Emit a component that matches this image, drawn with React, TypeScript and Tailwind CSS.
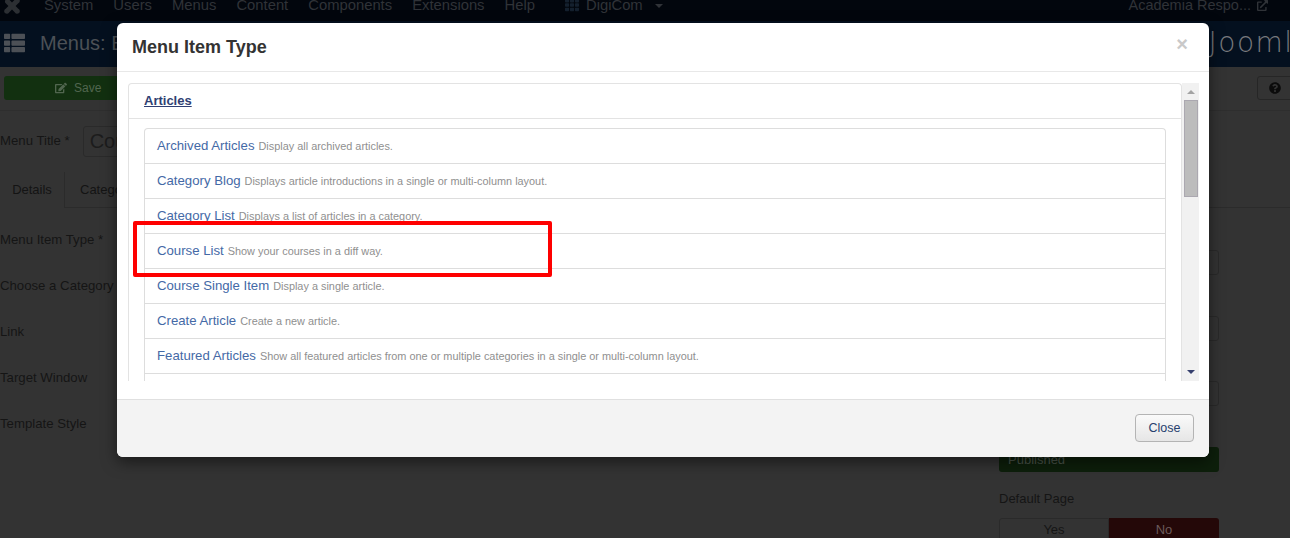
import React from "react";
import { FaExternalLinkAlt, FaQuestionCircle, FaEdit, FaTh, FaThList } from "react-icons/fa";

const rows: [string, string][] = [
  ["Archived Articles", "Display all archived articles."],
  ["Category Blog", "Displays article introductions in a single or multi-column layout."],
  ["Category List", "Displays a list of articles in a category."],
  ["Course List", "Show your courses in a diff way."],
  ["Course Single Item", "Display a single article."],
  ["Create Article", "Create a new article."],
  ["Featured Articles", "Show all featured articles from one or multiple categories in a single or multi-column layout."],
  ["", ""],
];

const navItems = ["System", "Users", "Menus", "Content", "Components", "Extensions", "Help"];
const labels = ["Menu Item Type *", "Choose a Category *", "Link", "Target Window", "Template Style"];

function Background() {
  return (
    <div className="h-[538px] w-[1290px] overflow-hidden bg-[#333333]">
      <div className="flex h-[21px] items-center overflow-hidden bg-[#02060d] text-[14.8px] text-[#303338]">
        <svg viewBox="0 0 20 20" className="ml-[3px] mt-[-10px] h-[18px] w-[18px] shrink-0" fill="#2c2f33">
          <path d="M3 2a3 3 0 0 1 4 1l3 3 3-3a3 3 0 1 1 4 4l-3 3 3 3a3 3 0 1 1-4 4l-3-3-3 3a3 3 0 1 1-4-4l3-3-3-3a3 3 0 0 1 0-4z" />
        </svg>
        <div className="ml-[23px] mt-[-10px] flex gap-[20px]">
          {navItems.map((n) => (
            <span key={n} className="leading-none">{n}</span>
          ))}
        </div>
        <div className="ml-[30px] mt-[-10px] flex items-center gap-[7px]">
          <FaTh className="h-[14px] w-[14px] text-[#14202e]" />
          <span className="leading-none">DigiCom</span>
          <span className="ml-[5px] mt-[2px] h-0 w-0 border-x-[4px] border-t-[4px] border-x-transparent border-t-[#303338]" />
        </div>
        <div className="ml-auto mr-[22px] mt-[-10px] flex items-center gap-[6px] text-[14.5px]">
          <span className="leading-none">Academia Respo...</span>
          <FaExternalLinkAlt className="h-[11px] w-[11px]" />
        </div>
      </div>
      <div className="flex h-[46px] items-center justify-between overflow-hidden bg-[#04101f]">
        <div className="ml-[4px] mt-[-2px] flex items-center gap-[15px] text-[20px] text-[#4c5056]">
          <FaThList className="h-[22px] w-[21px]" />
          <span>Menus: Edit</span>
        </div>
        <span className="mr-[-35px] mt-[-2px] shrink-0 font-['DejaVu_Sans'] text-[28px] font-extralight tracking-[1.5px] text-[#77797d]">Joomla!</span>
      </div>
      <div className="flex h-[44px] items-start justify-between border-b border-[#2e2e2e] pt-[9px]">
        <div className="ml-[4px] flex h-[24px] w-[150px] items-center gap-[7px] rounded-[3px] bg-[#123010] pl-[51px] text-[12px] text-[#51664f]">
          <FaEdit className="h-[12px] w-[12px]" />
          <span>Save</span>
        </div>
        <div className="mr-[-20px] flex h-[24px] w-[53px] items-center rounded-[3px] border border-[#262626] pl-[11px]">
          <FaQuestionCircle className="h-[12px] w-[12px] text-[#0b0b0b]" />
        </div>
      </div>
      <div className="mt-[15px] flex items-center gap-[13px] text-[13.2px] text-[#151515]">
        <span className="mt-[-2px]">Menu Title *</span>
        <div className="h-[31px] w-[200px] rounded-[3px] border border-[#2a2a2a] pl-[6px] text-[20px] leading-[29px] text-[#1c1c1c]">Course</div>
      </div>
      <div className="mt-[15px] flex h-[36px] border-b border-[#2b2b2b] text-[13px] text-[#141414]">
        <div className="flex h-[36px] w-[65px] items-center justify-center border-r border-[#2b2b2b] bg-[#333333]">Details</div>
        <div className="ml-[15px] flex items-center">Categories</div>
      </div>
      <div className="flex justify-between">
        <div className="mt-[23px] flex flex-col gap-[28px] text-[13.2px] leading-[18px] text-[#151515]">
          {labels.map((l) => (
            <span key={l}>{l}</span>
          ))}
        </div>
        <div className="mr-[71px] flex w-[220px] flex-col">
          <div className="mt-[42px] h-[25px] rounded-[3px] border border-[#2a2a2a]" />
          <div className="mt-[41px] h-[25px] rounded-[3px] border border-[#2a2a2a]" />
          <div className="mt-[40px] h-[25px] rounded-[3px] border border-[#2a2a2a]" />
          <div className="mt-[41px] flex h-[25px] items-center rounded-[3px] bg-[#0d1f0b] pl-[9px] pt-[1px] text-[13px] text-[#4a544a]">Published</div>
          <span className="mt-[18px] text-[13px] leading-[18px] text-[#151515]">Default Page</span>
          <div className="mt-[10px] flex h-[24px] text-[13px]">
            <div className="flex w-[110px] items-center justify-center rounded-l-[3px] border border-[#2a2a2a] text-[#151515]">Yes</div>
            <div className="flex w-[110px] items-center justify-center rounded-r-[3px] bg-[#240808] text-[#6b5a5a]">No</div>
          </div>
        </div>
      </div>
    </div>
  );
}

function Modal() {
  return (
    <div className="absolute left-[117px] top-[23px] flex h-[434px] w-[1092px] flex-col overflow-hidden rounded-[6px] bg-white shadow-[0_5px_15px_rgba(0,0,0,0.5)]">
      <div className="flex h-[49px] shrink-0 items-center justify-between border-b border-[#e8e8e8] pl-[15px] pr-[21px]">
        <h3 className="text-[18px] font-bold text-[#333333]">Menu Item Type</h3>
        <span className="mt-[-6px] text-[20px] font-bold leading-none text-[#c9c9c9]">×</span>
      </div>
      <div className="flex h-[328px] shrink-0 items-start border-b border-[#e0e0e0] pl-[11px] pt-[11px]">
        <div className="h-[298px] w-[1054px] overflow-hidden rounded-t-[4px] border-x border-t border-[#e3e3e3]">
          <div className="flex h-[35px] items-center border-b border-[#e3e3e3] pl-[15px]">
            <a className="text-[13px] font-bold text-[#2f3f73] underline">Articles</a>
          </div>
          <div className="ml-[15px] mt-[9px] w-[1022px] rounded-t-[4px] border-x border-t border-[#dddddd]">
            {rows.map(([t, d], i) => (
              <div key={i} className={`flex h-[35px] items-baseline gap-[4px] pl-[12px] pt-[8px] ${i < rows.length - 1 ? "border-b border-[#dddddd]" : ""}`}>
                <span className="text-[13.2px] leading-[18px] text-[#4469a6]">{t}</span>
                <span className="text-[10.9px] leading-[18px] text-[#8f8f8f]">{d}</span>
              </div>
            ))}
          </div>
        </div>
        <div className="flex h-[298px] w-[17px] shrink-0 flex-col items-center bg-[#f1f1f1]">
          <span className="mt-[7px] h-0 w-0 border-x-[4px] border-b-[4px] border-x-transparent border-b-[#a3a3a3]" />
          <div className="mt-[6px] h-[97px] w-[14px] border border-[#aba8b0] bg-[#bcbcbc]" />
          <span className="mt-auto mb-[7px] h-0 w-0 border-x-[4px] border-t-[4px] border-x-transparent border-t-[#36406e]" />
        </div>
      </div>
      <div className="flex flex-1 items-start justify-end bg-[#f3f3f3] pr-[15px] pt-[14px]">
        <button className="flex h-[28px] w-[59px] items-center justify-center rounded-[4px] border border-[#b4b4b4] bg-gradient-to-b from-[#fafafa] to-[#e6e6e6] text-[12.5px] text-[#27406e]">Close</button>
      </div>
    </div>
  );
}

export default function App() {
  return (
    <div className="relative h-[538px] w-[1290px] overflow-hidden font-['Liberation_Sans',Arial,sans-serif]">
      <Background />
      <Modal />
      <div className="absolute left-[133px] top-[221px] h-[56px] w-[419px] rounded-[2px] border-[4px] border-[#fe0000]" />
    </div>
  );
}
